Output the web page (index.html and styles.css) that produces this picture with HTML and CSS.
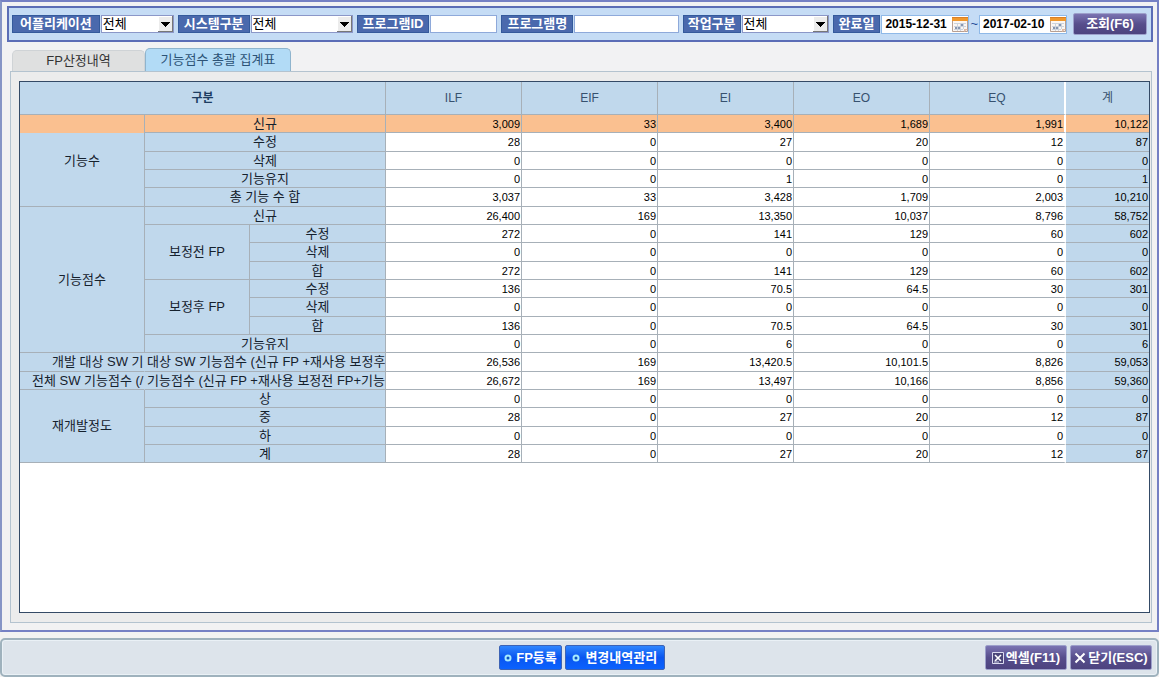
FILE: index.html
```html
<!DOCTYPE html>
<html lang="ko">
<head>
<meta charset="utf-8">
<title>기능점수 총괄 집계표</title>
<link rel="stylesheet" href="styles.css">
</head>
<body>
<svg class="sprite" aria-hidden="true">
  <symbol id="calendar" viewBox="0 0 16 17">
    <path d="M.5 3v12.500h15V3" fill="#fbf6f2" stroke="#b79f92"/>
    <path d="M0 1h16v4H0z" fill="#f0982c"/><path d="M0 1h16v1H0z" fill="#d97f28"/>
    <path d="M2 7.500h12M2 10.500h12M2 13.500h9M5.500 7v8M8.500 7v8M11.500 7v6" stroke="#ccd3dd" fill="none"/>
    <path d="M3 11h2v2H3zM6 11h2v2H6zM9 8h2v2H9z" fill="#8796b0"/>
    <path d="M12 16v-3h4z" fill="#dfb9a4"/>
  </symbol>
  <symbol id="arrow" viewBox="0 0 15 16"><path d="M3 6h9v1h-1v1h-1v1H9v1H8v1H7v-1H6V9H5V8H4V7H3z" fill="#000"/></symbol>
</svg>
<main class="frame">
  <form class="search">
    <div class="field"><label class="wide" for="app">어플리케이션</label><span class="pick pick-s"><select id="app"><option>전체</option></select><svg class="arrow"><use href="#arrow"/></svg></span></div>
    <div class="field"><label for="sys">시스템구분</label><span class="pick pick-l"><select id="sys"><option>전체</option></select><svg class="arrow"><use href="#arrow"/></svg></span></div>
    <div class="field"><label for="pid">프로그램ID</label><input class="text-s" id="pid" type="text"></div>
    <div class="field grow"><label for="pname">프로그램명</label><input class="text-l" id="pname" type="text"></div>
    <div class="field"><label class="tight" for="work">작업구분</label><span class="pick pick-m"><select id="work"><option>전체</option></select><svg class="arrow"><use href="#arrow"/></svg></span></div>
    <div class="field"><label for="from">완료일</label>
      <span class="date"><input id="from" type="text" value="2015-12-31"><button type="button" aria-label="시작일 선택"><svg><use href="#calendar"/></svg></button></span>
      <span class="tilde">~</span>
      <span class="date"><input id="to" type="text" value="2017-02-10" aria-label="종료일"><button type="button" aria-label="종료일 선택"><svg><use href="#calendar"/></svg></button></span>
    </div>
    <button class="btn purple query" type="button">조회(F6)</button>
  </form>
  <nav class="tabs">
    <button class="tab" type="button">FP산정내역</button>
    <button class="tab active" type="button">기능점수 총괄 집계표</button>
  </nav>
  <section class="panel">
    <div class="grid">
      <table>
        <colgroup><col class="c1"><col class="c2"><col class="c3"><col class="cn"><col class="cn"><col class="cn"><col class="cn"><col class="cn"><col class="ct"></colgroup>
        <thead>
          <tr><th class="main" colspan="3">구분</th><th>ILF</th><th>EIF</th><th>EI</th><th>EO</th><th class="last">EQ</th><th>계</th></tr>
        </thead>
        <tbody>
          <tr class="selected"><th class="lead" rowspan="5">기능수</th><th colspan="2">신규</th><td>3,009</td><td>33</td><td>3,400</td><td>1,689</td><td>1,991</td><td>10,122</td></tr>
          <tr><th colspan="2">수정</th><td>28</td><td>0</td><td>27</td><td>20</td><td>12</td><td>87</td></tr>
          <tr><th colspan="2">삭제</th><td>0</td><td>0</td><td>0</td><td>0</td><td>0</td><td>0</td></tr>
          <tr><th colspan="2">기능유지</th><td>0</td><td>0</td><td>1</td><td>0</td><td>0</td><td>1</td></tr>
          <tr><th colspan="2">총 기능 수 합</th><td>3,037</td><td>33</td><td>3,428</td><td>1,709</td><td>2,003</td><td>10,210</td></tr>
          <tr><th rowspan="8">기능점수</th><th colspan="2">신규</th><td>26,400</td><td>169</td><td>13,350</td><td>10,037</td><td>8,796</td><td>58,752</td></tr>
          <tr><th rowspan="3">보정전 FP</th><th>수정</th><td>272</td><td>0</td><td>141</td><td>129</td><td>60</td><td>602</td></tr>
          <tr><th>삭제</th><td>0</td><td>0</td><td>0</td><td>0</td><td>0</td><td>0</td></tr>
          <tr><th>합</th><td>272</td><td>0</td><td>141</td><td>129</td><td>60</td><td>602</td></tr>
          <tr><th rowspan="3">보정후 FP</th><th>수정</th><td>136</td><td>0</td><td>70.5</td><td>64.5</td><td>30</td><td>301</td></tr>
          <tr><th>삭제</th><td>0</td><td>0</td><td>0</td><td>0</td><td>0</td><td>0</td></tr>
          <tr><th>합</th><td>136</td><td>0</td><td>70.5</td><td>64.5</td><td>30</td><td>301</td></tr>
          <tr><th colspan="2">기능유지</th><td>0</td><td>0</td><td>6</td><td>0</td><td>0</td><td>6</td></tr>
          <tr><th class="clip join indent-l">개발 대상 SW 기</th><th class="clip indent-s" colspan="2">대상 SW 기능점수 (신규 FP +재사용 보정후</th><td>26,536</td><td>169</td><td>13,420.5</td><td>10,101.5</td><td>8,826</td><td>59,053</td></tr>
          <tr><th class="clip join indent-m">전체 SW 기능점수 (/</th><th class="clip indent-s" colspan="2">기능점수 (신규 FP +재사용 보정전 FP+기능-</th><td>26,672</td><td>169</td><td>13,497</td><td>10,166</td><td>8,856</td><td>59,360</td></tr>
          <tr><th rowspan="4">재개발정도</th><th colspan="2">상</th><td>0</td><td>0</td><td>0</td><td>0</td><td>0</td><td>0</td></tr>
          <tr><th colspan="2">중</th><td>28</td><td>0</td><td>27</td><td>20</td><td>12</td><td>87</td></tr>
          <tr><th colspan="2">하</th><td>0</td><td>0</td><td>0</td><td>0</td><td>0</td><td>0</td></tr>
          <tr><th colspan="2">계</th><td>28</td><td>0</td><td>27</td><td>20</td><td>12</td><td>87</td></tr>
        </tbody>
      </table>
    </div>
  </section>
</main>
<footer class="actions">
  <div class="center">
    <button class="btn blue" type="button"><svg class="dot" viewBox="0 0 8 8"><circle cx="4" cy="4" r="2.5"/></svg>FP등록</button>
    <button class="btn blue long" type="button"><svg class="dot" viewBox="0 0 8 8"><circle cx="4" cy="4" r="2.5"/></svg>변경내역관리</button>
  </div>
  <div class="right">
    <button class="btn purple tool" type="button"><svg class="icon" viewBox="0 0 12 12"><path d="M.5.5h11v11H.5z" fill="#4b4679" stroke="#dcdcf0"/><path d="M3 3l6 6M9 3L3 9" stroke="#fff" stroke-width="1.6"/><path d="M2 10h5" stroke="#c9c9e2"/></svg>엑셀(F11)</button>
    <button class="btn purple tool" type="button"><svg class="icon" viewBox="0 0 12 12"><path d="M1.500 1.500l9 9M10.500 1.500l-9 9" stroke="#fff" stroke-width="2"/></svg>닫기(ESC)</button>
  </div>
</footer>
</body>
</html>
```
FILE: styles.css
```css
* { box-sizing: border-box; }
body {
  margin: 0;
  min-height: 100vh;
  display: flex;
  flex-direction: column;
  gap: 6px;
  background: #f2f2f2;
  color: #111;
  font: 13px/16px "Liberation Sans", "Noto Sans CJK KR", sans-serif;
}
button, input, select { font: inherit; color: inherit; margin: 0; }
.sprite { display: none; }
svg { display: block; }
.frame {
  flex: 1;
  display: flex;
  flex-direction: column;
  padding: 4px 4px 7px 5px;
  border: 2px solid #7580c4;
  border-left-color: #8695c6;
  background: #f2f2f3;
}
.search {
  display: flex;
  align-items: center;
  gap: 4px;
  height: 36px;
  padding: 0 4px 0 3px;
  border: 2px solid #5b6db6;
  background: #c5dcf5;
}
.field { display: flex; align-items: center; gap: 1px; }
.grow { flex: 1; }
.field label {
  height: 18px;
  padding: 0 5px;
  border: 1px solid #345a9c;
  background: #4a69ad;
  color: #fff;
  font-weight: bold;
  white-space: nowrap;
}
.field label.wide { padding: 0 7px; }
.field label.tight { padding: 0 4px; }
.field input, .pick {
  height: 18px;
  border: 1px solid #8ea9da;
  background: #fff;
}
.pick { position: relative; border-color: #8b97c8; }
.pick select {
  width: 100%;
  height: 16px;
  padding: 0 0 0 1px;
  border: 0;
  appearance: none;
  background: transparent;
  color: #000;
  line-height: 16px;
}
.pick-s { width: 73px; }
.pick-m { width: 87px; }
.pick-l { width: 102px; }
.arrow {
  position: absolute;
  top: 0;
  right: 0;
  width: 15px;
  height: 16px;
  background: #ececec;
  box-shadow: inset -1px -1px #777, inset 1px 1px #fff;
  pointer-events: none;
}
.text-s { width: 67px; }
.text-l { flex: 1; width: 100px; min-width: 40px; }
.date {
  display: flex;
  width: 88px;
  height: 19px;
  border: 1px solid #8fb9e8;
  background: #fff;
}
.field .date input {
  flex: 1;
  min-width: 0;
  height: 17px;
  padding: 0 0 0 3px;
  border: 0;
  background: transparent;
  color: #000;
  font-size: 12px;
  font-weight: bold;
}
.date button { padding: 0; border: 0; background: none; }
.date svg { width: 16px; height: 17px; }
.tilde { color: #234b96; }
.btn {
  display: flex;
  align-items: center;
  justify-content: center;
  gap: 4px;
  height: 25px;
  padding: 0 4px;
  border-radius: 2px;
  color: #fff;
  font-size: 13px;
  font-weight: bold;
  white-space: nowrap;
}
.purple {
  border: 1px solid #9da0cb;
  background: linear-gradient(#7b74b2, #574e8c 50%, #4d437f);
}
.blue {
  border: 1px solid #3c63b5;
  background: linear-gradient(#2f86ff, #0a56f0 50%, #0a62ff);
}
.query { width: 74px; height: 22px; margin: 0 0 0 2px; }
.tool { width: 82px; gap: 2px; padding: 0; }
.long { width: 100px; gap: 5px; }
.tabs {
  display: flex;
  align-items: flex-end;
  height: 29px;
  padding: 0 0 0 5px;
}
.tab {
  width: 133px;
  height: 21px;
  padding: 0;
  border: 1px solid #cfd3d6;
  border-bottom: 0;
  border-radius: 5px 5px 0 0;
  background: #dfe0e0;
  color: #333;
}
.tab.active {
  width: 146px;
  height: 23px;
  border-color: #8fb4cd;
  background: #b2dbf6;
  color: #2c5376;
}
.panel {
  flex: 1;
  display: flex;
  margin: 0 1px 0 3px;
  padding: 9px 1px 9px 8px;
  border: 1px solid #b4c3cf;
  background: #ececec;
}
.grid { flex: 1; border: 1px solid #344a66; background: #fff; }
table {
  width: 100%;
  table-layout: fixed;
  border-collapse: separate;
  border-spacing: 0;
}
.c1 { width: 125px; }
.c2 { width: 105px; }
.c3, .cn { width: 136px; }
.ct { width: 83px; }
th, td {
  height: 18px;
  padding: 0;
  border: 0 solid #a7b0b8;
  border-width: 0 1px 1px 0;
  line-height: 16px;
  white-space: nowrap;
}
th { background: #c0d8ec; color: #15212d; font-weight: normal; }
thead th { height: 33px; color: #36516f; font-size: 12px; }
thead .main { color: #1e3d62; font-weight: bold; }
tbody tr:nth-child(3n+2) > * { height: 19px; }
td {
  padding: 0 1px 0 0;
  text-align: right;
  font-size: 11px;
  color: #000;
}
td:nth-last-child(2), thead .last { border-right: 2px solid #fff; }
td:last-child { background: #c0d8ec; }
td:last-child, thead th:last-child { border-right: 0; }
.selected > * , .selected > td:last-child { background: #fac090; }
.selected > .lead { background: linear-gradient(#fac090 18px, #c0d8ec 18px); }
.clip { overflow: hidden; text-align: left; }
.join { border-right-color: #c0d8ec; }
.indent-s { padding-left: 2px; }
.indent-m { padding-left: 12px; }
.indent-l { padding-left: 32px; }
.actions {
  display: grid;
  grid-template-columns: 1fr auto 1fr;
  align-items: center;
  height: 39px;
  padding: 0 5px 0 10px;
  border: 2px solid #9fb2bd;
  border-radius: 5px;
  background: #dde4eb;
  box-shadow: inset 0 0 0 1px #eaf1f6;
}
.center, .right { display: flex; gap: 3px; }
.center { grid-column: 2; }
.right { justify-content: flex-end; }
.dot { width: 8px; height: 8px; fill: #0a50c0; stroke: #a5eaff; stroke-width: 2; }
.icon { width: 12px; height: 12px; fill: none; }
```
